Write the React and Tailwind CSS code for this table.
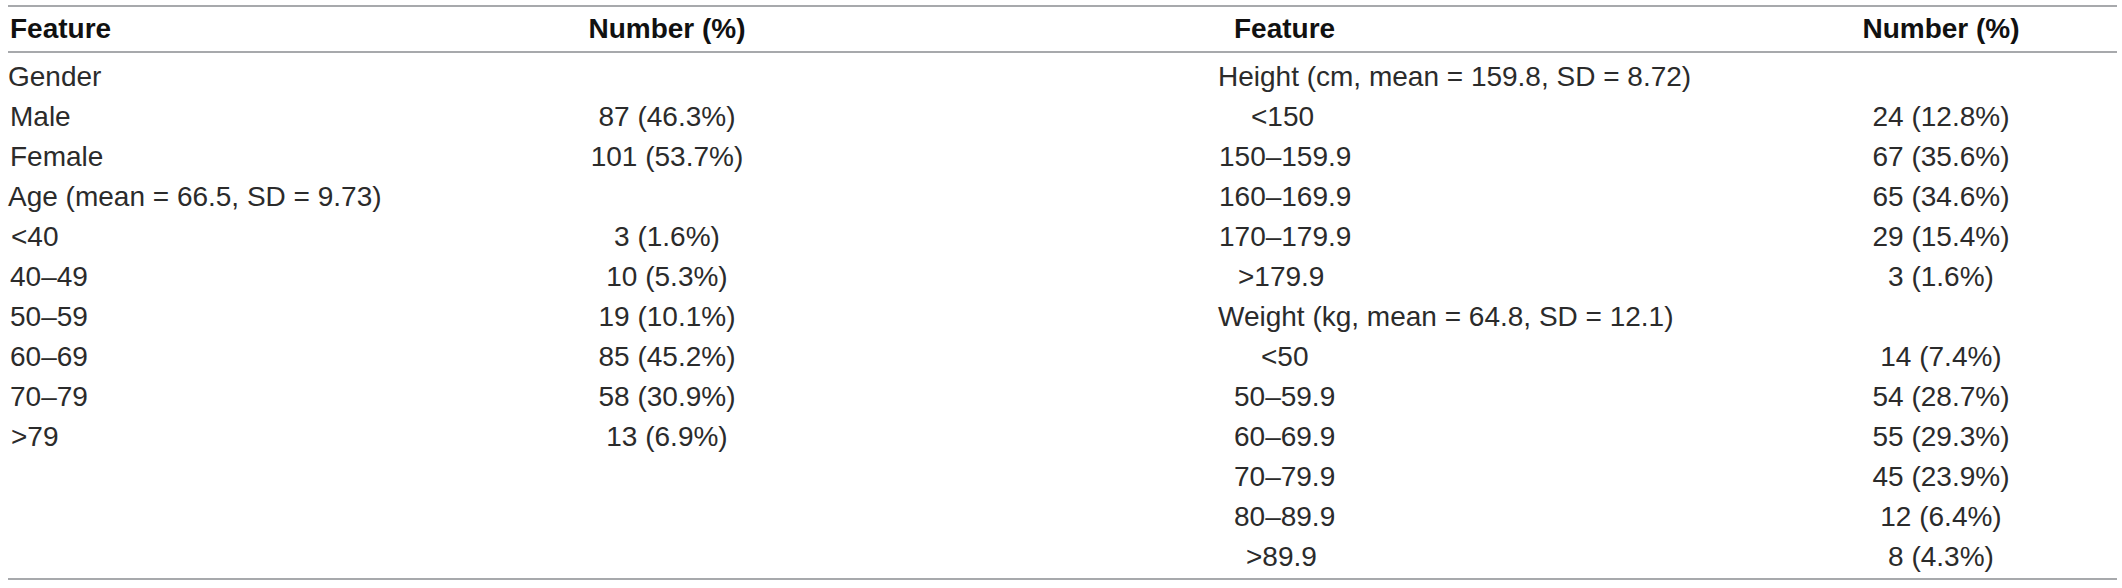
import React from 'react';

const leftRows = [
  { label: 'Gender', value: '', pad: 'pl-0' },
  { label: 'Male', value: '87 (46.3%)', pad: 'pl-[2px]' },
  { label: 'Female', value: '101 (53.7%)', pad: 'pl-[2px]' },
  { label: 'Age (mean = 66.5, SD = 9.73)', value: '', pad: 'pl-0' },
  { label: '<40', value: '3 (1.6%)', pad: 'pl-[3px]' },
  { label: '40–49', value: '10 (5.3%)', pad: 'pl-[2px]' },
  { label: '50–59', value: '19 (10.1%)', pad: 'pl-[2px]' },
  { label: '60–69', value: '85 (45.2%)', pad: 'pl-[2px]' },
  { label: '70–79', value: '58 (30.9%)', pad: 'pl-[2px]' },
  { label: '>79', value: '13 (6.9%)', pad: 'pl-[3px]' },
];

const rightRows = [
  { label: 'Height (cm, mean = 159.8, SD = 8.72)', value: '', pad: 'pl-[7px]' },
  { label: '<150', value: '24 (12.8%)', pad: 'pl-[40px]' },
  { label: '150–159.9', value: '67 (35.6%)', pad: 'pl-[8px]' },
  { label: '160–169.9', value: '65 (34.6%)', pad: 'pl-[8px]' },
  { label: '170–179.9', value: '29 (15.4%)', pad: 'pl-[8px]' },
  { label: '>179.9', value: '3 (1.6%)', pad: 'pl-[27px]' },
  { label: 'Weight (kg, mean = 64.8, SD = 12.1)', value: '', pad: 'pl-[7px]' },
  { label: '<50', value: '14 (7.4%)', pad: 'pl-[50px]' },
  { label: '50–59.9', value: '54 (28.7%)', pad: 'pl-[23px]' },
  { label: '60–69.9', value: '55 (29.3%)', pad: 'pl-[23px]' },
  { label: '70–79.9', value: '45 (23.9%)', pad: 'pl-[23px]' },
  { label: '80–89.9', value: '12 (6.4%)', pad: 'pl-[23px]' },
  { label: '>89.9', value: '8 (4.3%)', pad: 'pl-[35px]' },
];

export default function App() {
  return (
    <div
      className="w-[2122px] h-[588px] bg-white pt-[5px] pl-[8px] text-[28px] text-[#2b2b2b]"
      style={{ fontFamily: '"Liberation Sans", Arial, sans-serif' }}
    >
      <div className="w-[2109px] border-t-2 border-b-2 border-[#a7a9ac] pb-[1px]">
        {/* header */}
        <div className="flex h-[46px] items-center border-b-2 border-[#a7a9ac] font-bold text-[#111]">
          <div className="flex w-[1203px]">
            <div className="w-[509px] pl-[2px]">Feature</div>
            <div className="w-[300px] text-center">Number (%)</div>
          </div>
          <div className="flex w-[906px]">
            <div className="w-[580px] pl-[23px]">Feature</div>
            <div className="w-[300px] text-center">Number (%)</div>
          </div>
        </div>

        {/* body */}
        <div className="flex pt-[4px]">
          <div className="w-[1203px]">
            {leftRows.map((r) => (
              <div key={r.label} className="flex h-[40px] items-center whitespace-nowrap">
                <div className={`w-[509px] ${r.pad}`}>{r.label}</div>
                <div className="w-[300px] text-center">{r.value}</div>
              </div>
            ))}
          </div>
          <div className="w-[906px]">
            {rightRows.map((r) => (
              <div key={r.label} className="flex h-[40px] items-center whitespace-nowrap">
                <div className={`w-[580px] ${r.pad}`}>{r.label}</div>
                <div className="w-[300px] text-center">{r.value}</div>
              </div>
            ))}
          </div>
        </div>
      </div>
    </div>
  );
}
